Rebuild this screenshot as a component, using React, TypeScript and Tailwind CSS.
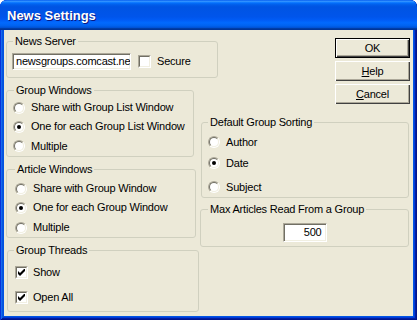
import React from "react";

function Radio({ checked }: { checked?: boolean }) {
  return (
    <span className="w-[12px] h-[12px] shrink-0 rounded-full border border-t-[#ACA899] border-l-[#ACA899] border-r-white border-b-white">
      <span className="flex w-full h-full items-center justify-center rounded-full border border-t-[#716F64] border-l-[#716F64] border-r-[#F1EFE2] border-b-[#F1EFE2] bg-white">
        {checked && <span className="w-[4px] h-[4px] rounded-full bg-black" />}
      </span>
    </span>
  );
}

function Check({ checked }: { checked?: boolean }) {
  return (
    <span className="w-[13px] h-[13px] shrink-0 border border-t-[#ACA899] border-l-[#ACA899] border-r-white border-b-white">
      <span className="flex w-full h-full items-center justify-center border border-t-[#716F64] border-l-[#716F64] border-r-[#F1EFE2] border-b-[#F1EFE2] bg-white">
        {checked && (
          <svg width="7" height="7" viewBox="0 0 7 7">
            <path d="M0 2 L2 4 L6 0 L7 0 L7 2 L2 7 L0 5 Z" fill="#000" />
          </svg>
        )}
      </span>
    </span>
  );
}

function Group({
  label,
  className,
  legendClass,
  children,
}: {
  label: string;
  className?: string;
  legendClass?: string;
  children: React.ReactNode;
}) {
  return (
    <fieldset className={"border border-[#D0D0BF] rounded-[3px] " + (className ?? "")}>
      <legend className={"px-[2px] leading-[13px] " + (legendClass ?? "ml-[6px]")}>{label}</legend>
      {children}
    </fieldset>
  );
}

function RadioRow({ label, checked, className }: { label: string; checked?: boolean; className?: string }) {
  return (
    <div className={"flex items-center gap-[6px] " + (className ?? "")}>
      <Radio checked={checked} />
      <span className="leading-[13px]">{label}</span>
    </div>
  );
}

function Button({ children, def }: { children: React.ReactNode; def?: boolean }) {
  return (
    <div
      className={
        "w-[75px] h-[20px] flex items-center justify-center bg-[#ECE9D8] leading-[13px] " +
        (def
          ? "border border-black shadow-[inset_1px_1px_0_#fff,inset_-1px_-1px_0_#404040,inset_-2px_-2px_0_#ACA899]"
          : "shadow-[inset_1px_1px_0_#fff,inset_-1px_-1px_0_#404040,inset_-2px_-2px_0_#ACA899]")
      }
    >
      {children}
    </div>
  );
}

export default function App() {
  return (
    <div className="w-[417px] h-[320px] bg-white font-['Liberation_Sans',Arial,sans-serif] text-[11px] tracking-[-0.2px] text-black">
      <div className="w-[417px] h-[320px] flex flex-col rounded-t-[7px] overflow-hidden bg-[#0054E3] shadow-[inset_1px_1px_0_#0831D9,inset_-1px_-1px_0_#00138C,inset_2px_2px_0_#166AEE,inset_-2px_-2px_0_#001EA0,inset_3px_3px_0_#0855DD,inset_-3px_-3px_0_#003BDA]">
        <div className="h-[30px] shrink-0 flex items-center pl-[7px] pt-[2px] bg-[linear-gradient(to_bottom,#0058EE_0%,#3593FF_4%,#288EFF_6%,#127DFF_8%,#036FFC_10%,#0262EE_14%,#0057E5_20%,#0054E3_24%,#0055EB_56%,#005BF5_66%,#026AFE_76%,#0062EF_86%,#0052D6_92%,#0040AB_94%,#003092_100%)]">
          <span className="text-white font-bold text-[13px] tracking-normal [text-shadow:1px_1px_0_#0A1883]">
            News Settings
          </span>
        </div>
        <div className="flex-1 mx-[4px] mb-[4px] bg-[#ECE9D8] flex pt-[5px] pl-[2px] pr-[3px]">
          {/* Left column */}
          <div className="w-[194px] shrink-0 flex flex-col">
            <Group label="News Server" className="w-[212px]">
              <div className="flex items-center pl-[5px] pt-[5px] pb-[7px]">
                <div className="w-[119px] h-[17px] bg-white overflow-hidden whitespace-nowrap flex items-center pl-[3px] border border-t-[#ACA899] border-l-[#ACA899] border-r-white border-b-white shadow-[inset_1px_1px_0_#716F64,inset_-1px_-1px_0_#F1EFE2]">
                  newsgroups.comcast.ne
                </div>
                <div className="ml-[7px] flex items-center gap-[6px]">
                  <Check />
                  <span>Secure</span>
                </div>
              </div>
            </Group>
            <Group label="Group Windows" className="w-[188px] mt-[6px]" legendClass="ml-[7px]">
              <div className="flex flex-col pl-[6px] pt-[1px]">
                <RadioRow label="Share with Group List Window" className="h-[19px]" />
                <RadioRow label="One for each Group List Window" checked className="h-[19px]" />
                <RadioRow label="Multiple" className="h-[20px]" />
              </div>
            </Group>
            <Group label="Article Windows" className="w-[190px] mt-[6px]" legendClass="ml-[8px]">
              <div className="flex flex-col pl-[8px] pt-[3px]">
                <RadioRow label="Share with Group Window" className="h-[19px]" />
                <RadioRow label="One for each Group Window" checked className="h-[19px]" />
                <RadioRow label="Multiple" className="h-[19px] mt-[1px]" />
              </div>
            </Group>
            <Group label="Group Threads" className="w-[192px] ml-[1px] mt-[6px]">
              <div className="flex flex-col pl-[7px] pt-[5px] pb-[4px]">
                <div className="h-[20px] flex items-center gap-[5px]">
                  <Check checked />
                  <span>Show</span>
                </div>
                <div className="h-[20px] mt-[5px] flex items-center gap-[5px]">
                  <Check checked />
                  <span>Open All</span>
                </div>
              </div>
            </Group>
          </div>
          {/* Right column */}
          <div className="flex-1 flex flex-col">
            <div className="self-end flex flex-col gap-[3px] mt-[3px]">
              <Button def>OK</Button>
              <Button>
                <span>
                  <span className="underline">H</span>elp
                </span>
              </Button>
              <Button>
                <span>
                  <span className="underline">C</span>ancel
                </span>
              </Button>
            </div>
            <Group label="Default Group Sorting" className="w-[208px] ml-[1px] mt-[12px]">
              <div className="flex flex-col pl-[6px]">
                <RadioRow label="Author" className="h-[20px] mt-[3px] gap-[5px]" />
                <RadioRow label="Date" checked className="h-[20px] mt-[1px] gap-[5px]" />
                <RadioRow label="Subject" className="h-[20px] mt-[4px] gap-[5px]" />
              </div>
            </Group>
            <Group label="Max Articles Read From a Group" className="w-[209px] mt-[5px]" legendClass="ml-[7px]">
              <div className="flex justify-center pt-[7px] pb-[4px]">
                <div className="w-[44px] h-[19px] bg-white flex items-center justify-end pr-[4px] border border-t-[#ACA899] border-l-[#ACA899] border-r-white border-b-white shadow-[inset_1px_1px_0_#716F64,inset_-1px_-1px_0_#F1EFE2]">
                  500
                </div>
              </div>
            </Group>
          </div>
        </div>
      </div>
    </div>
  );
}
